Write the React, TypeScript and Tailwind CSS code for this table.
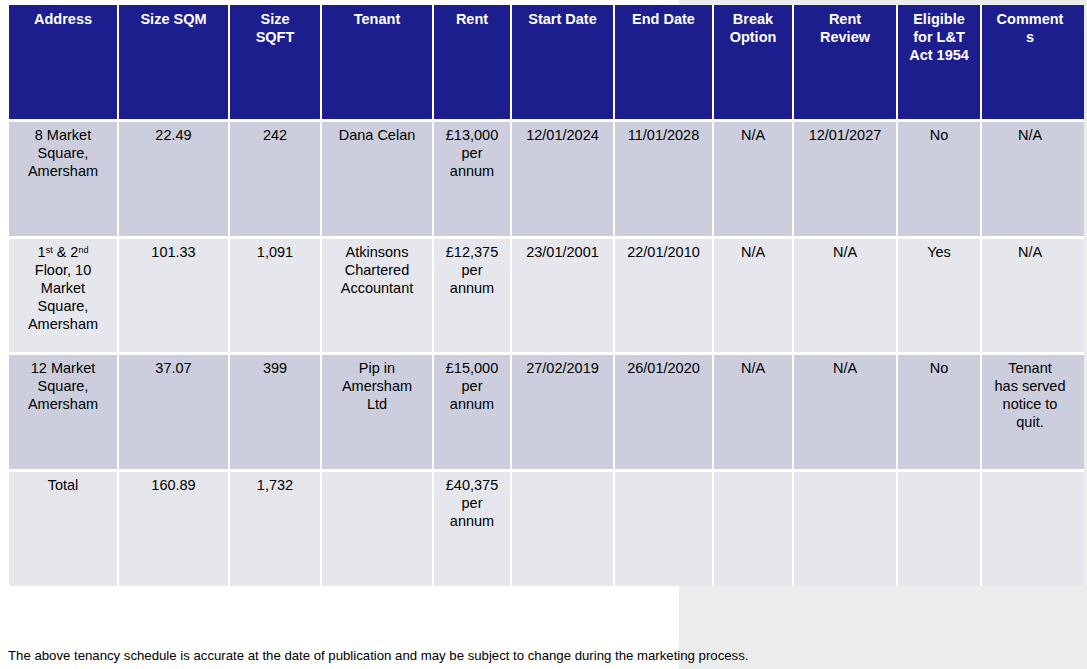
import React from 'react';

const headers = [
  'Address',
  'Size SQM',
  'Size SQFT',
  'Tenant',
  'Rent',
  'Start Date',
  'End Date',
  'Break Option',
  'Rent Review',
  'Eligible for L&T Act 1954',
  'Comment s',
];

type Row = React.ReactNode[];

const rows: Row[] = [
  [
    '8 Market Square, Amersham',
    '22.49',
    '242',
    'Dana Celan',
    '£13,000 per annum',
    '12/01/2024',
    '11/01/2028',
    'N/A',
    '12/01/2027',
    'No',
    'N/A',
  ],
  [
    <>
      1<sup className="text-[9px]">st</sup> &amp; 2<sup className="text-[9px]">nd</sup> Floor, 10 Market Square,
      Amersham
    </>,
    '101.33',
    '1,091',
    'Atkinsons Chartered Accountant',
    '£12,375 per annum',
    '23/01/2001',
    '22/01/2010',
    'N/A',
    'N/A',
    'Yes',
    'N/A',
  ],
  [
    '12 Market Square, Amersham',
    '37.07',
    '399',
    'Pip in Amersham Ltd',
    '£15,000 per annum',
    '27/02/2019',
    '26/01/2020',
    'N/A',
    'N/A',
    'No',
    <>
      Tenant
      <br />
      has served
      <br />
      notice to
      <br />
      quit.
    </>,
  ],
  ['Total', '160.89', '1,732', '', '£40,375 per annum', '', '', '', '', '', ''],
];

// last column sits a little left of centre in the source document
const pad = (j: number) => (j === 10 ? 'pl-[10px] pr-[16px]' : 'px-[10px]');

export default function App() {
  return (
    <div className="w-[1087px] h-[669px] flex flex-col bg-[linear-gradient(to_right,#ffffff_679px,#ebecec_679px)] font-['Liberation_Sans',Arial,sans-serif] text-black">
      <div className="ml-[9px] mt-[5px] w-[1075px] bg-white grid grid-cols-[108px_109px_90px_110px_76px_101px_97px_78px_102px_82px_102px] grid-rows-[114px_114px_113px_114px_114px] gap-x-[2px] gap-y-[3px]">
        {headers.map((h, j) => (
          <div
            key={h}
            className={`bg-[#1b1e8c] text-white font-bold text-[14.5px] leading-[18px] text-center pt-[5px] ${pad(j)}`}
          >
            {h}
          </div>
        ))}
        {rows.map((row, i) =>
          row.map((cell, j) => (
            <div
              key={`${i}-${j}`}
              className={`${
                i % 2 === 0 ? 'bg-[#cccedd]' : 'bg-[#e6e7ed]'
              } text-[14.5px] leading-[18px] text-center pt-[4px] ${pad(j)}`}
            >
              {cell}
            </div>
          ))
        )}
      </div>
      <p className="ml-[8px] mt-[62px] text-[13.2px] leading-[16px]">
        The above tenancy schedule is accurate at the date of publication and may be subject to change during the
        marketing process.
      </p>
    </div>
  );
}
